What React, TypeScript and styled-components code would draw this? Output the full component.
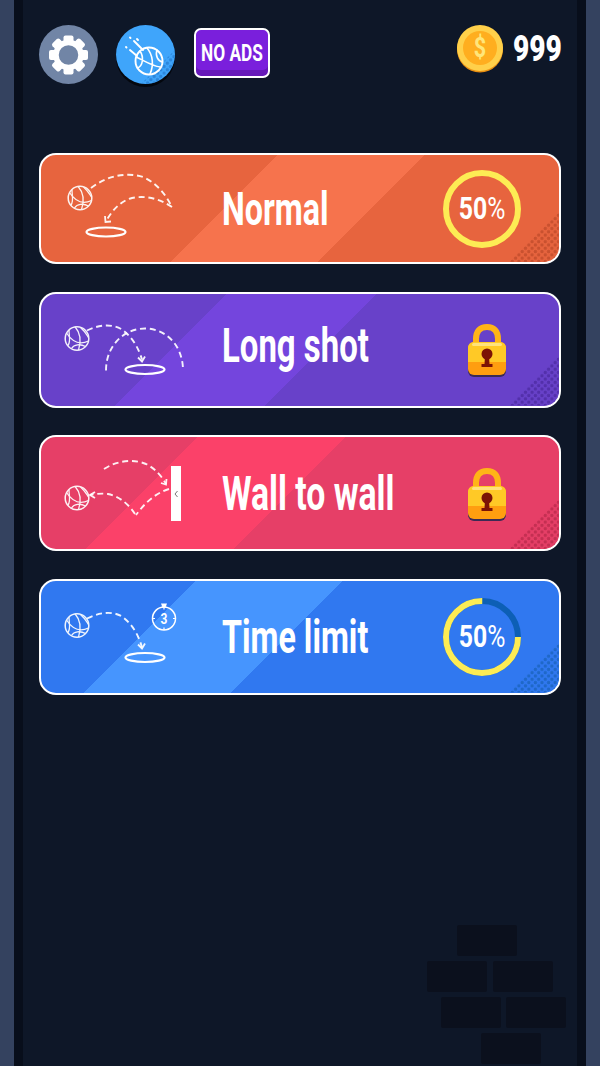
import styled, { createGlobalStyle } from 'styled-components'

const GlobalStyle = createGlobalStyle`
  html, body {
    margin: 0;
    padding: 0;
    background: #0e1728;
  }
  * {
    box-sizing: border-box;
  }
`

type Mode = {
  title: string
  titleSize: number
  squeeze: number
  lift: number
  top: number
  height: number
  base: string
  light: string
  dots: string
  bandFrom: number
  bandTo: number
  progress?: number
  ringTrack?: string
}

const modes: Mode[] = [
  { title: 'Normal', titleSize: 47, squeeze: 0.687, lift: 0, top: 155, height: 111, base: '#e7643e', light: '#f6734d', dots: '#c9512f', bandFrom: 167, bandTo: 271, progress: 100 },
  { title: 'Long shot', titleSize: 49, squeeze: 0.672, lift: 8, top: 293.5, height: 116, base: '#6841c9', light: '#7445dd', dots: '#5330ab', bandFrom: 131, bandTo: 237 },
  { title: 'Wall to wall', titleSize: 49, squeeze: 0.689, lift: 0, top: 437, height: 116, base: '#e63f67', light: '#fb4169', dots: '#c42f52', bandFrom: 111, bandTo: 215 },
  { title: 'Time limit', titleSize: 47, squeeze: 0.686, lift: 0, top: 580.5, height: 116, base: '#3078f0', light: '#4695fe', dots: '#1f68c8', bandFrom: 109, bandTo: 213, progress: 75, ringTrack: '#0d5fb5' },
]

const Screen = styled.div`
  display: flex;
  width: 600px;
  height: 1066px;
  overflow: hidden;
  position: relative;
  background: #0e1728;
  font-family: Roboto, 'Liberation Sans', sans-serif;
`

const Rail = styled.div<{ $side: 'left' | 'right' }>`
  flex: 0 0 23px;
  background: #34425f;
  ${(p) => (p.$side === 'left' ? 'border-right: 9px solid #080e1b;' : 'border-left: 9px solid #080e1b;')}
`

const Main = styled.main`
  flex: 1;
  min-width: 0;
  padding: 25px 16px 0;
`

const TopBar = styled.header`
  display: flex;
  align-items: flex-start;
  height: 59px;
`

const RoundButton = styled.div<{ $bg: string; $shadow?: boolean }>`
  position: relative;
  width: 59px;
  height: 59px;
  margin-right: 18px;
  border-radius: 50%;
  overflow: hidden;
  background: ${(p) => p.$bg};
  ${(p) => p.$shadow && 'box-shadow: 0 3px 0 #04070e;'}
`

const RoundIcon = styled.svg`
  display: block;
  width: 59px;
  height: 59px;
  position: relative;
`

const NoAds = styled.div`
  display: flex;
  align-items: center;
  justify-content: center;
  width: 76px;
  height: 50px;
  margin: 3px 0 0 1px;
  border: 2px solid #fff;
  border-radius: 7px;
  background: #7a1fdc;
  box-shadow: inset 0 -6px 0 #6619b9;
  color: #fff;
  font-size: 24px;
  font-weight: 700;
  padding-bottom: 1px;
  white-space: nowrap;
`

const NoAdsText = styled.span`
  transform: scaleX(0.72);
`

const Wallet = styled.div`
  display: flex;
  align-items: center;
  gap: 10px;
  margin-left: auto;
  margin-right: -1px;
  height: 48px;
`

const Coins = styled.span`
  display: block;
  width: 49px;
  color: #fff;
  font-size: 36px;
  font-weight: 900;
  transform: scaleX(0.78);
  transform-origin: left center;
`

const CardList = styled.section`
  display: flex;
  flex-direction: column;
  gap: 27.5px;
  margin-top: 69px;
`

const Card = styled.article<{ $h: number; $base: string; $light: string; $from: number; $to: number }>`
  position: relative;
  display: flex;
  align-items: center;
  height: ${(p) => p.$h}px;
  border: 2px solid #fff;
  border-radius: 17px;
  overflow: hidden;
  background: linear-gradient(
    135deg,
    ${(p) => p.$base} ${(p) => p.$from}px,
    ${(p) => p.$light} ${(p) => p.$from}px,
    ${(p) => p.$light} ${(p) => p.$to}px,
    ${(p) => p.$base} ${(p) => p.$to}px
  );
`

const Diagram = styled.svg`
  flex: 0 0 181px;
  height: 100%;
  display: block;
`

const Title = styled.h2<{ $size: number; $squeeze: number; $lift: number }>`
  flex: 1;
  min-width: 0;
  margin: 0 0 ${(p) => p.$lift}px;
  color: #fff;
  font-size: ${(p) => p.$size}px;
  font-weight: 700;
  white-space: nowrap;
  position: relative;
  transform: scaleX(${(p) => p.$squeeze});
  transform-origin: left center;
`

const Badge = styled.div`
  position: relative;
  flex: 0 0 78px;
  display: grid;
  place-items: center;
  width: 78px;
  height: 78px;
  margin-right: 38px;
  & > * {
    grid-area: 1 / 1;
  }
`

const RingSvg = styled.svg`
  display: block;
  width: 78px;
  height: 78px;
`

const Percent = styled.span`
  color: #fff;
  font-size: 31px;
  font-weight: 700;
  margin-left: 1px;
  transform: scaleX(0.8);
`

const PercentSign = styled.span`
  font-weight: 400;
`

const LockIcon = styled.svg`
  display: block;
  margin: 2px 0 0 10px;
`

const Halftone = styled.div<{ $color: string; $size: number }>`
  position: absolute;
  right: 0;
  bottom: 0;
  width: ${(p) => p.$size}px;
  height: ${(p) => p.$size}px;
  clip-path: polygon(100% 0, 100% 100%, 0 100%);
  background-image:
    radial-gradient(circle, ${(p) => p.$color} 1.6px, transparent 2px),
    radial-gradient(circle, ${(p) => p.$color} 1.6px, transparent 2px);
  background-size: 6.6px 6.6px;
  background-position: 0 0, 3.3px 3.3px;
`

const Wall = styled.div`
  position: absolute;
  left: 427px;
  top: 925px;
  display: flex;
  flex-direction: column;
  gap: 5px;
`

const BrickRow = styled.div<{ $indent: number; $gap: number }>`
  display: flex;
  gap: ${(p) => p.$gap}px;
  padding-left: ${(p) => p.$indent}px;
`

const Brick = styled.div`
  width: 60px;
  height: 31px;
  border-radius: 2px;
  background: #0b101d;
`

// basketball outline, centred on x/y
function Ball({ x, y }: { x: number; y: number }) {
  return (
    <g transform={`translate(${x} ${y})`} fill="none" stroke="#fff" strokeWidth="1.3" opacity="0.92">
      <circle r="11.8" strokeWidth="1.5" />
      <path d="M-10.5 -5.5 C-5 3 2 7 11.5 2.5" />
      <path d="M-2 -11.7 C3 -6 5 1 1.5 11.6" />
      <path d="M-8 -8.5 C-8 -2 -6 3 -9 7" />
      <path d="M3.5 -11 C9 -6 10 -3 11.6 -1" />
      <path d="M-5.5 10 C-3 6 3 5 8.5 8" />
    </g>
  )
}

const Dash = ({ d }: { d: string }) => (
  <path d={d} fill="none" stroke="#fff" strokeWidth="1.9" strokeDasharray="6 3.8" opacity="0.92" />
)

const Arrow = ({ d }: { d: string }) => (
  <path d={d} fill="none" stroke="#fff" strokeWidth="1.8" opacity="0.92" />
)

const Hoop = ({ x, y }: { x: number; y: number }) => (
  <ellipse cx={x} cy={y} rx="19.5" ry="4.5" fill="none" stroke="#fff" strokeWidth="2.2" />
)

function NormalDiagram() {
  return (
    <>
      <Ball x={80} y={198} />
      <Dash d="M91 188 C108 175 128 172 143 177 C157 183 166 195 172 207" />
      <Dash d="M172 207 C160 199 146 195 132 198 C120 201 112 211 106 221" />
      <Arrow d="M105 216 L105.5 222 L111 221.5" />
      <Hoop x={106} y={232} />
    </>
  )
}

function LongShotDiagram() {
  return (
    <>
      <Ball x={77} y={338} />
      <Dash d="M87 330 C99 324 112 323 122 329 C133 337 139 349 142 359" />
      <Arrow d="M138 357 L142 361 L145 356" />
      <Dash d="M106 370 C106 345 124 328 145 328 C166 328 183 345 183 370" />
      <Hoop x={145} y={369} />
    </>
  )
}

function WallDiagram() {
  return (
    <>
      <Ball x={77} y={498} />
      <Dash d="M104 469 C118 460 134 459 146 464 C156 469 162 477 166 484" />
      <Arrow d="M161 483 L166 484.5 L166.5 479" />
      <Dash d="M169 489 C155 493 144 504 136 515" />
      <Dash d="M135 514 C128 503 118 496 108 494 C102 493 96 494 90 495" />
      <Arrow d="M95 492 L90 495 L95 498" />
      <rect x="171" y="466" width="10" height="55" fill="#fff" />
      <path d="M177.5 491 L175 494 L177.5 497" fill="none" stroke="#777" strokeWidth="1" />
    </>
  )
}

function TimeDiagram() {
  return (
    <>
      <Ball x={77} y={625} />
      <Dash d="M87 618 C99 612 112 610 122 616 C133 624 139 636 142 647" />
      <Arrow d="M138 644 L142 648 L145 643" />
      <Hoop x={145} y={657} />
      <circle cx="164" cy="618" r="11.5" fill="none" stroke="#fff" strokeWidth="1.5" />
      <path d="M161 603 H167 L165.5 607 H162.5 Z" fill="#fff" />
      <path d="M164 606.5 V609 M164 627 V629.5 M152.5 618 H155 M173 618 H175.5" stroke="#fff" strokeWidth="1.2" />
      <text x="0" y="0" transform="translate(164 623.5) scale(0.8 1)" textAnchor="middle" fill="#fff" fontSize="15" fontWeight="700">3</text>
    </>
  )
}

const diagrams = [NormalDiagram, LongShotDiagram, WallDiagram, TimeDiagram]

function Gear() {
  const teeth = [0, 45, 90, 135, 180, 225, 270, 315]
  return (
    <RoundIcon viewBox="39 25 59 59">
      <g transform="translate(68.5 55)">
        {teeth.map((a) => (
          <rect key={a} x="-5" y="-19.5" width="10" height="8" rx="2" fill="#fff" transform={`rotate(${a})`} />
        ))}
        <circle r="12.5" fill="none" stroke="#fff" strokeWidth="5.5" />
      </g>
    </RoundIcon>
  )
}

function BallStreak() {
  return (
    <RoundIcon viewBox="116 25 59 59">
      <g fill="none" stroke="#fff" strokeWidth="1.9" strokeLinecap="round">
        <circle cx="149" cy="61" r="13.5" />
        <path d="M136 57 C143 60 152 66 160 67 M147 48 C153 55 154 65 150 74 M140 51 C144 57 143 66 137.5 68 M157 50 C155 56 158 61 162.5 62" strokeWidth="1.6" />
        <path d="M130 37.5 L130.5 38 M134 41 L143 50 M126 47 L126.5 47.5 M130 50 L137 56 M137 39 L138 40" />
      </g>
    </RoundIcon>
  )
}

function Coin() {
  return (
    <svg width="46" height="48" viewBox="0 0 46 48">
      <circle cx="23" cy="24.5" r="23" fill="#e98f12" />
      <circle cx="23" cy="23" r="23" fill="#ffd04a" />
      <circle cx="23" cy="23" r="17" fill="#ffae1f" />
      <text x="0" y="0" transform="translate(23 32) scale(0.8 1)" textAnchor="middle" fill="#ffe67a" fontSize="27" fontWeight="700">$</text>
    </svg>
  )
}

function Lock() {
  return (
    <LockIcon width="38" height="53" viewBox="0 0 38 53">
      <path d="M8 22 V15 C8 7 12 3 19 3 C26 3 30 7 30 15 V22" fill="none" stroke="#ffb417" strokeWidth="6" />
      <rect x="0" y="20" width="38" height="33" rx="6" fill="#3b2a55" />
      <rect x="0" y="18" width="38" height="33" rx="6" fill="#ff9e10" />
      <path d="M0 24 C0 20 3 18 6 18 H32 C35 18 38 20 38 24 V38 H0 Z" fill="#ffc926" />
      <rect x="4" y="19" width="30" height="3" rx="1.5" fill="#ffe27c" />
      <circle cx="19" cy="30" r="5.5" fill="#7c1305" />
      <path d="M17 32 H21 L21.5 40 H24.5 V43 H13.5 V40 H16.5 Z" fill="#7c1305" />
    </LockIcon>
  )
}

function Ring({ progress, track }: { progress: number; track?: string }) {
  const r = 36
  const c = 2 * Math.PI * r
  return (
    <RingSvg viewBox="0 0 78 78">
      {track && <circle cx="39" cy="39" r={r} fill="none" stroke={track} strokeWidth="6" />}
      <circle
        cx="39"
        cy="39"
        r={r}
        fill="none"
        stroke="#fdec54"
        strokeWidth="6"
        strokeDasharray={`${(c * progress) / 100} ${c}`}
      />
    </RingSvg>
  )
}

export default function App() {
  return (
    <Screen>
      <GlobalStyle />
      <Rail $side="left" />
      <Main>
        <TopBar>
          <RoundButton $bg="#7185a6">
            <Gear />
          </RoundButton>
          <RoundButton $bg="#3fa5fb" $shadow>
            <Halftone $color="#2c86db" $size={34} />
            <BallStreak />
          </RoundButton>
          <NoAds>
            <NoAdsText>NO ADS</NoAdsText>
          </NoAds>
          <Wallet>
            <Coin />
            <Coins>999</Coins>
          </Wallet>
        </TopBar>
        <CardList>
          {modes.map((m, i) => {
            const Drawing = diagrams[i]
            return (
              <Card key={m.title} $h={m.height} $base={m.base} $light={m.light} $from={m.bandFrom} $to={m.bandTo}>
                <Halftone $color={m.dots} $size={50} />
                <Diagram viewBox={`41 ${m.top} 181 ${m.height - 4}`}>
                  <Drawing />
                </Diagram>
                <Title $size={m.titleSize} $squeeze={m.squeeze} $lift={m.lift}>
                  {m.title}
                </Title>
                <Badge>
                  {m.progress !== undefined ? (
                    <>
                      <Ring progress={m.progress} track={m.ringTrack} />
                      <Percent>
                        50<PercentSign>%</PercentSign>
                      </Percent>
                    </>
                  ) : (
                    <Lock />
                  )}
                </Badge>
              </Card>
            )
          })}
        </CardList>
      </Main>
      <Rail $side="right" />
      <Wall>
        <BrickRow $indent={30} $gap={5}>
          <Brick />
        </BrickRow>
        <BrickRow $indent={0} $gap={6}>
          <Brick />
          <Brick />
        </BrickRow>
        <BrickRow $indent={14} $gap={5}>
          <Brick />
          <Brick />
        </BrickRow>
        <BrickRow $indent={54} $gap={5}>
          <Brick />
        </BrickRow>
      </Wall>
    </Screen>
  )
}
